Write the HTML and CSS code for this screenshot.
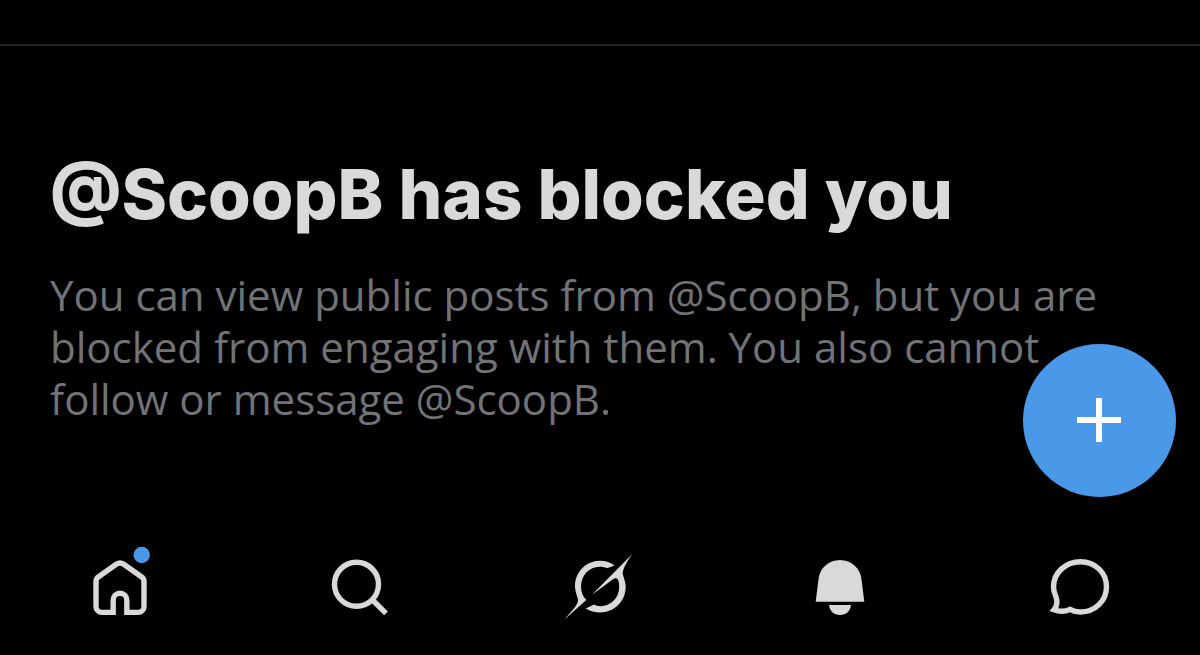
FILE: index.html
```html
<!DOCTYPE html>
<html lang="en">
  <head>
    <meta charset="UTF-8" />
    <meta name="viewport" content="width=device-width, initial-scale=1.0" />
    <title>@ScoopB</title>
    <link rel="stylesheet" href="styles.css" />
  </head>
  <body>
    <header class="topbar"></header>
    <main class="blocked">
      <h1>@ScoopB has blocked you</h1>
      <p>
        You can view public posts from @ScoopB, but you are blocked from
        engaging with them. You also cannot follow or message @ScoopB.
      </p>
    </main>
    <button class="compose" type="button" aria-label="New post">
      <svg viewBox="0 0 45 45" aria-hidden="true">
        <path d="M22 0V44M0 22H44" fill="none" stroke="currentColor" stroke-width="6" />
      </svg>
    </button>
    <nav class="tabs">
      <a href="#home" aria-label="Home">
        <svg class="line" viewBox="0 0 100 110" aria-hidden="true">
          <path d="M43.2 82.4H32a6 6 0 0 1-6-6V51.5q0-3 2.6-4.700L46.600 34q3.400-2.200 6.800 0L71.400 46.800q2.600 1.700 2.600 4.700V76.400a6 6 0 0 1-6 6H56.800V70a6.800 6.800 0 0 0-13.600 0Z" />
          <circle class="dot" cx="71.7" cy="25" r="8.2" />
        </svg>
      </a>
      <a href="#search" aria-label="Search">
        <svg class="line" viewBox="0 0 100 110" aria-hidden="true">
          <circle cx="46.5" cy="54.3" r="22" />
          <path d="M62 69.500L76 83.300" />
        </svg>
      </a>
      <a href="#grok" aria-label="Grok">
        <svg viewBox="0 0 100 110" aria-hidden="true">
          <path d="M64.500 35.500C60 32 55 30.700 50 30.700C36 30.700 25 42 25 56C25 62 27.500 66 28 70C28 76 20 82 15 89L36.300 70C32.500 66 31 61.500 31 56.700C31 45 39.500 36.700 49.500 36.700C52.500 36.700 55 37.200 57 38.200Z" />
          <path d="M35.700 78.500C40 81.300 45 82.500 50 82.500C64.500 82.500 75.700 71 75.700 57C75.700 51 73 47 72.700 43C73 38 78 30 82.300 24L41.700 65L62 50C65 47.500 67.500 48 68.300 50.500C68.800 52.500 69.200 54.500 69.200 57C69.200 68 60.500 76.200 50.500 76.200C48 76.200 46 75.500 44 74.500Z" />
        </svg>
      </a>
      <a href="#notifications" aria-label="Notifications">
        <svg viewBox="0 0 100 110" aria-hidden="true">
          <path d="M50 30C38.500 30 29.300 38.500 28.400 50L25.700 71.700H74.300L71.600 50C70.700 38.500 61.500 30 50 30Z" />
          <path d="M39 75H61C60.500 81 56 85 50 85S39.500 81 39 75Z" />
        </svg>
      </a>
      <a href="#messages" aria-label="Messages">
        <svg class="line" viewBox="0 0 100 110" aria-hidden="true">
          <path d="M50.500 31.700C65 31.700 76.500 42.500 76.500 56.700S65 82 50.500 82C46.500 82 43 81 40 79.300C34.500 82 28.500 81.500 24 79.800C27.500 75.500 27.500 71 26 67C24.500 63.500 23.500 60.500 23.500 56.700C23.500 42.500 36 31.700 50.500 31.700Z" />
        </svg>
      </a>
    </nav>
  </body>
</html>
```
FILE: styles.css
```css
* {
  box-sizing: border-box;
}
body {
  margin: 0;
  min-height: 100vh;
  display: flex;
  flex-direction: column;
  background-color: #000;
  color: #d9d9d9;
  font-family: "Open Sans", sans-serif;
}
.topbar {
  height: 46px;
  border-bottom: 2px solid #222325;
}
.blocked {
  flex: 1;
  padding: 104px 96px 0 50px;
}
h1 {
  margin: 0;
  font-family: Inter, sans-serif;
  font-size: 69px;
  font-weight: 800;
  line-height: 88px;
}
p {
  margin: 31px 0 0;
  color: #717376;
  font-size: 42px;
  line-height: 52px;
}
.compose {
  position: fixed;
  right: 24px;
  bottom: 158px;
  width: 153px;
  height: 153px;
  display: flex;
  align-items: center;
  justify-content: center;
  padding: 0;
  border: 0;
  border-radius: 50%;
  background-color: #4a99e9;
  color: #fff;
}
.compose svg {
  width: 45px;
  height: 45px;
}
.tabs {
  display: grid;
  grid-template-columns: repeat(5, 1fr);
  padding-bottom: 15px;
}
.tabs a {
  display: flex;
  justify-content: center;
  color: #d9d9d9;
}
.tabs svg {
  width: 100px;
  height: 110px;
  fill: currentColor;
}
.tabs .line {
  fill: none;
  stroke: currentColor;
  stroke-width: 5.4;
}
.tabs .dot {
  fill: #4a99e9;
  stroke: none;
}
```
